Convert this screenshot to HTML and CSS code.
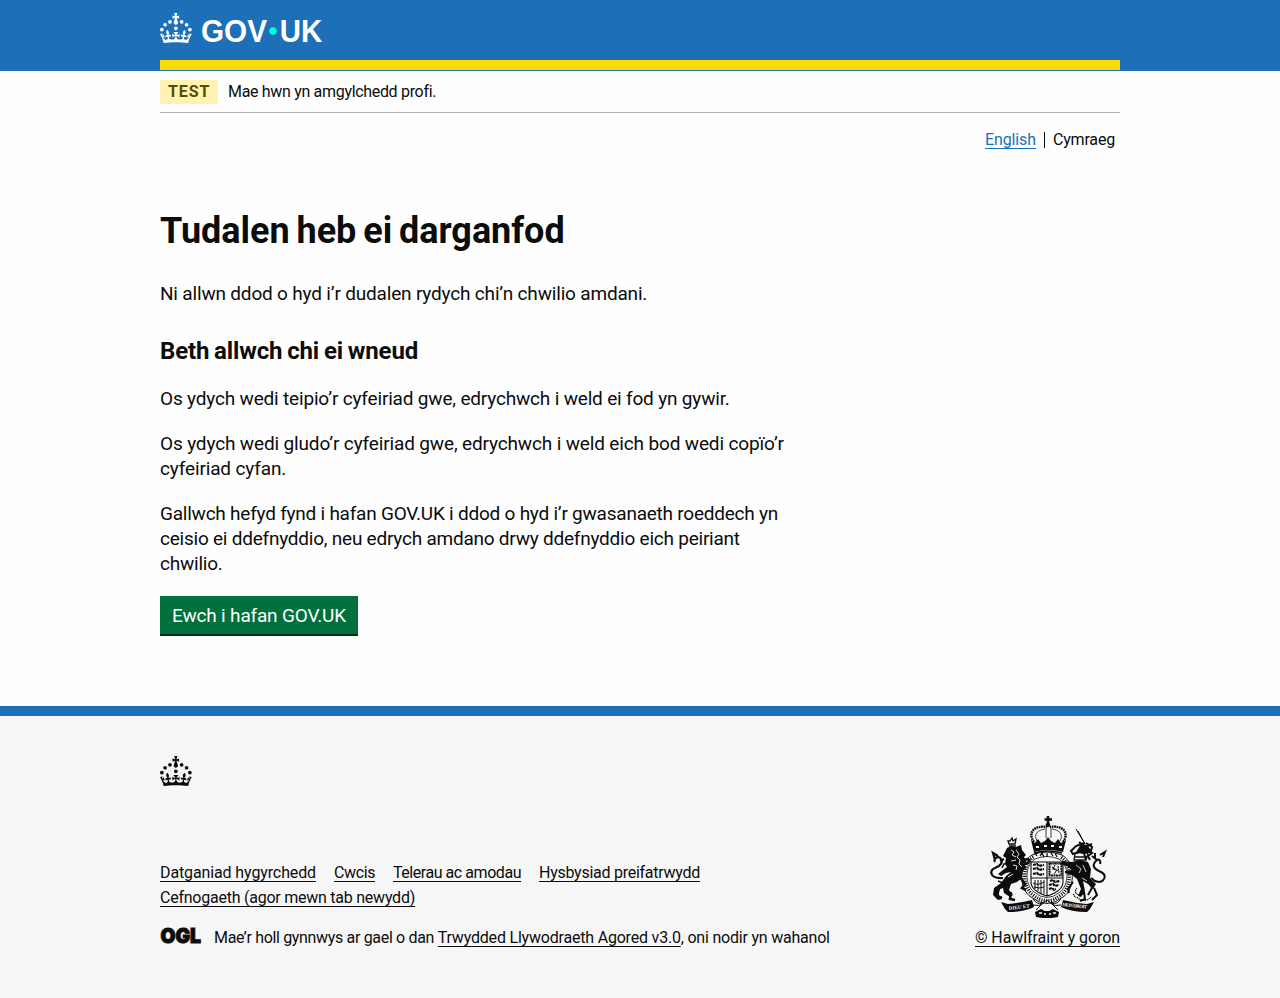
FILE: index.html
```html
<!DOCTYPE html>
<html lang="cy">
<head>
<meta charset="utf-8">
<title>Tudalen heb ei darganfod</title>
<link rel="stylesheet" href="styles.css">
</head>
<body>
<svg width="0" height="0" class="defs" aria-hidden="true">
  <symbol id="crown" viewBox="0 0 64 60">
    <circle cx="20" cy="17.6" r="3.7"/><circle cx="10.2" cy="23.5" r="3.7"/><circle cx="3.7" cy="33.2" r="3.7"/><circle cx="31.7" cy="30.6" r="3.7"/><circle cx="43.3" cy="17.6" r="3.7"/><circle cx="53.2" cy="23.5" r="3.7"/><circle cx="59.7" cy="33.2" r="3.7"/>
    <path d="M33.1,9.8c.2-.1.3-.3.5-.5l4.6,2.4v-6.8l-4.6,1.5c-.1-.2-.3-.3-.5-.5l1.9-5.9h-6.7l1.9,5.9c-.2.1-.3.3-.5.5l-4.6-1.5v6.8l4.6-2.4c.1.2.3.3.5.5l-2.6,8c-.9,2.8,1.2,5.7,4.1,5.7h0c3,0,5.1-2.9,4.1-5.7l-2.6-8ZM37,37.9s-3.4,3.8-4.1,6.1c2.2,0,4.2-.5,6.4-2.8l-.7,8.5c-2-2.8-4.4-4.1-5.7-3.8.1,3.1.5,6.7,5.8,7.2,3.7.3,6.7-1.5,7-3.8.4-2.6-2-4.3-3.7-1.6-1.4-4.5,2.4-6.1,4.9-3.2-1.9-4.5-1.8-7.7,2.4-10.9,3,4,2.6,7.3-1.2,11.1,2.4-1.3,6.2,0,4,4.6-1.2-2.8-3.7-2.2-4.2.2-.3,1.7.7,3.7,3,4.2,1.9.3,4.7-.9,7-5.9-1.3,0-2.4.7-3.9,1.7l2.4-8c.6,2.3,1.4,3.7,2.2,4.5.6-1.6.5-2.8,0-5.3l5,1.8c-2.6,3.6-5.2,8.7-7.3,17.5-7.4-1.1-15.7-1.7-24.5-1.7h0c-8.8,0-17.1.6-24.5,1.7-2.1-8.9-4.7-13.9-7.3-17.5l5-1.8c-.5,2.5-.6,3.7,0,5.3.8-.8,1.6-2.3,2.2-4.5l2.4,8c-1.5-1-2.6-1.7-3.9-1.7,2.3,5,5.2,6.2,7,5.9,2.3-.4,3.3-2.4,3-4.2-.5-2.4-3-3.1-4.2-.2-2.2-4.6,1.6-6,4-4.6-3.7-3.7-4.2-7.1-1.2-11.1,4.2,3.2,4.3,6.4,2.4,10.9,2.5-2.8,6.3-1.3,4.9,3.2-1.8-2.7-4.1-1-3.7,1.6.3,2.3,3.3,4.1,7,3.8,5.4-.5,5.7-4.2,5.8-7.2-1.3-.2-3.7,1-5.7,3.8l-.7-8.5c2.2,2.3,4.2,2.7,6.4,2.8-.7-2.3-4.1-6.1-4.1-6.1h10.6Z"/>
  </symbol>
</svg>

<header class="header">
  <div class="container header-bar">
    <svg class="logo" viewBox="0 0 162 30" role="img" aria-label="GOV.UK">
      <use href="#crown" width="32" height="30"/>
      <text x="41" y="29" textLength="66" lengthAdjust="spacingAndGlyphs">GOV</text>
      <circle class="dot" cx="113" cy="18" r="3.7"/>
      <text x="119.8" y="29" textLength="42.5" lengthAdjust="spacingAndGlyphs">UK</text>
    </svg>
  </div>
</header>

<div class="container">
  <div class="phase"><strong class="tag">TEST</strong><span class="phase-text">Mae hwn yn amgylchedd profi.</span></div>
  <nav class="languages"><a class="link-blue" href="#">English</a><span class="current">Cymraeg</span></nav>
  <main class="main">
    <h1>Tudalen heb ei darganfod</h1>
    <p>Ni allwn ddod o hyd i’r dudalen rydych chi’n chwilio amdani.</p>
    <h2>Beth allwch chi ei wneud</h2>
    <p>Os ydych wedi teipio’r cyfeiriad gwe, edrychwch i weld ei fod yn gywir.</p>
    <p class="pasted">Os ydych wedi gludo’r cyfeiriad gwe, edrychwch i weld eich bod wedi copïo’r<br>cyfeiriad cyfan.</p>
    <p class="search">Gallwch hefyd fynd i hafan GOV.UK i ddod o hyd i’r gwasanaeth roeddech yn<br>ceisio ei ddefnyddio, neu edrych amdano drwy ddefnyddio eich peiriant<br>chwilio.</p>
    <a class="button" href="#">Ewch i hafan GOV.UK</a>
  </main>
</div>

<footer class="footer">
  <div class="container">
    <svg class="footer-crown" aria-hidden="true"><use href="#crown" width="32" height="30"/></svg>
    <div class="footer-row">
      <div class="footer-meta">
        <ul class="links">
          <li><a class="l1" href="#">Datganiad hygyrchedd</a></li>
          <li><a class="l2" href="#">Cwcis</a></li>
          <li><a class="l3" href="#">Telerau ac amodau</a></li>
          <li><a class="l4" href="#">Hysbysiad preifatrwydd</a></li>
          <li><a class="l5" href="#">Cefnogaeth (agor mewn tab newydd)</a></li>
        </ul>
        <div class="licence">
          <svg class="ogl" viewBox="0 0 41 17" role="img" aria-label="OGL"><text x="0.4" y="15.4" textLength="40.6" lengthAdjust="spacingAndGlyphs">OGL</text></svg>
          <span class="licence-text"><span class="t1">Mae’r holl gynnwys ar gael o dan </span><a class="t2" href="#">Trwydded Llywodraeth Agored v3.0</a><span class="t3">, oni nodir yn wahanol</span></span>
        </div>
      </div>
      <a class="copyright" href="#">
        <svg class="crest" viewBox="0 0 126 106" aria-hidden="true">
          <!-- crown -->
          <path d="M63 4v9M59.500 7.500h7.500" stroke-width="2.600"/>
          <circle class="solid" cx="63" cy="13" r="2.300"/>
          <path d="M49 30C42 20 50 13 62 15M78 30C85 20 77 13 65 15" stroke-width="2.400" stroke-dasharray="1.800 .6"/>
          <path d="M52 29C48 22 53 18 60 17M75 29C79 22 74 18 67 17M61 16v10M66 16v10" stroke-width=".8"/>
          <path class="solid" d="M46 28l4 3 3-4 3 4 4-2 3-4 3 4 4 2 3-4 3 4 5-3-3 12q-15-4-29 0z"/>
          <path class="light" d="M51 35h3M59 34h3M66 34h3M74 35h3" stroke-width="2.200"/>
          <path d="M49 41q14-4 28 0" stroke-width="1.600"/>
          <!-- garter and shield -->
          <path d="M47 43C34 50 33 77 46 85Q62 98 78 85C91 77 90 50 77 43Q62 37 47 43z" stroke-width="1"/>
          <path d="M50 47C39 54 40 73 49 80Q62 91 75 80C84 73 85 54 74 47Q62 42 50 47z" stroke-width=".8"/>
          <path d="M48.500 45C37 52 37 75 47.500 82.500Q62 95 76.500 82.500C87 75 87 52 75.500 45" stroke-width="3.400" stroke-dasharray="1.100 1.300"/>
          <path d="M55 44l2-3 2 4M62 41v4M66 41l2 3M52 44l-2-3M70 41l2 4" stroke-width="1.300"/>
          <path d="M46 50h32v20q0 9-16 14-16-5-16-14zM62 50v34M46 66h32" stroke-width="1.100"/>
          <path d="M48 53l4-1 2 2 5-1M48 57l4-1 2 2 5-1M48 62l4-1 2 2 5-1M65 69l3-1 2 2 5-1M64 73l4-1 2 2 4-1M64 77l3-1 2 2 2-1" stroke-width="2.200" stroke-dasharray="3 .6"/>
          <path d="M65 52h11v11H65zM70 53l-2 4 4 1-3 4M73 54l1 7M67 55l6 4M64 51h13v13H64z" stroke-width="1.100" stroke-dasharray="2 .5"/>
          <path d="M50 68v9M53 68v11M56 68v13M59 68v14M48 71q5 3 11-1M49 75q5 2 10 0" stroke-width="1"/>
          <!-- lion -->
          <path d="M23 29l1 3h6l1-5-3 2-1-3-2 3zM24 34h7" stroke-width="1.300"/>
          <path class="solid" d="M22 36l4-2 5 1 5-2 1 5 4 5-2 2 2 5-2 1 2 5-3 3-1 7-5 4-6 2-2 6 4 5-3 2-6-4-1-5-5 2 1 5 3 4-4 1-5-5 1-7 7-5 5-7 5-4-5 1-5 3-3-2 5-4 4-3-2-3 1-6-3-2z"/>
          <path class="light" d="M26 38l3 2-2 3 4 2M31 38l3 4-2 3 3 3-1 4 3 3M26 49l5-1M28 62l-5 3M28 53l4 1-1 4" stroke-width=".9"/>
          <path d="M36 53l7-2 2-4M36 48l8-1M35 65l5 7-3 4 4 2M14 76l-2 8 5 2M26 80l-1 7 5 1" stroke-width="2.600"/>
          <path d="M18 66C3 67 5 57 10 56c6-2 8-6 6-9-2-4-8-1-6 3M13 44l-5-3 2 7M15 49l4-2" stroke-width="2.200"/>
          <path d="M26 43l-7 1M25 51l-6 1-2 4M18 71l-5-2" stroke-width="1.500"/>
          <!-- unicorn -->
          <path d="M91 17l9 15M93 19l7 13" stroke-width="1"/>
          <path d="M99 31l-8 3-5 5 2 3 6-2 5 1 2 7M101 31l6 4-1 4-4-2M94 30l6 5 7-3M102 39l5 2-4 3 2 4" stroke-width="2"/>
          <path class="solid" d="M96 32l6 1 4 5-3 4-8-1-5 1z"/>
          <path d="M90 42l-1 6h12l2-6M90 45h12" stroke-width="1.300"/>
          <path class="solid" d="M87 50l8-2 8 2 3 7-1 9 6 6-3 5-5-5-5-3 2 10-4 6-3-1 3-7-4-10-5-4-7-2v-2l7-1-5-4-7-2 3-3z"/>
          <path class="light" d="M91 53l5 4-2 4M98 53l3 7M97 66l5 3" stroke-width=".8"/>
          <path d="M88 70l-5 7 1 4M109 76l3 7-5 5M99 80l1 7-5 2M104 68l3 8-4 7" stroke-width="2"/>
          <path d="M106 66C116 76 125 64 116 60c-7-3-9-6-6-10 4-5 6-1 5 2M112 48l-5-4M110 47v-6M115 43l5-3-2 5" stroke-width="2"/>
          <path d="M92 76c-5 6 3 9 8 5M92 85c4 5 11 4 14 0M88 82l3 4" stroke-width="1.100" stroke-dasharray="1.500 .6"/>
          <!-- motto scroll -->
          <path class="solid" d="M16 90l7 2q12-1 24-4l2 7q-10 5-26 5l-3-3zM109 90l-7 2q-12-1-24-4l-2 7q10 5 26 5l3-3z"/>
          <text class="motto" x="24" y="98" textLength="21" transform="rotate(-7 24 98)">DIEU ET</text>
          <text class="motto" x="77" y="94" textLength="25" transform="rotate(6 77 94)">MON DROIT</text>
          <path d="M48 87q6 9 14 1 8 8 14-1M48 93q6 2 11-2M76 93q-6 2-11-2M57 92l-6 6M67 92l6 6" stroke-width="1"/>
          <path class="solid" d="M50 100l6-3 4 2 4 0 4-2 6 3-1 5-6 1H57l-6-1z"/>
          <path class="light" d="M54 101h3M59 102h2M64 102h2M68 101h3" stroke-width="1.300"/>
        </svg>
        <span class="copyright-text">© Hawlfraint y goron</span>
      </a>
    </div>
  </div>
</footer>
</body>
</html>
```
FILE: styles.css
```css
* { box-sizing: border-box; }
body { margin: 0; background: #fefefe; color: #0b0c0c; font: 400 16px/20px Roboto, sans-serif; }
.defs { display: block; }
.container { width: 960px; margin: 0 auto; }

.header { background: #1d70b8; height: 71px; }
.header-bar { height: 70px; padding-top: 13px; border-bottom: 10px solid #ffd90a; }
.logo { display: block; width: 162px; height: 30px; fill: #fff; overflow: visible; }
.logo text { font: 700 30.5px "Liberation Sans", sans-serif; }
.logo .dot { fill: #00ffe0; }

.phase { display: flex; align-items: center; height: 42px; border-bottom: 1px solid #b1b4b6; }
.tag { width: 58px; height: 24px; padding-left: 8px; background: #fff2b3; color: #594d00; font-weight: 700; line-height: 24px; letter-spacing: .9px; }
.phase-text { margin-left: 10px; letter-spacing: -.32px; }

.languages { display: flex; justify-content: flex-end; padding: 17px 5px 0 0; }
.languages .current { position: relative; margin-left: 8px; padding-left: 9px; letter-spacing: -.185px; }
.languages .current::before { content: ""; position: absolute; left: 0; top: 2px; width: 1px; height: 16px; background: #0b0c0c; }
a { color: inherit; text-decoration: underline; text-decoration-thickness: 1px; text-underline-offset: 3px; text-decoration-skip-ink: none; }
.link-blue { color: #1d70b8; letter-spacing: -.109px; }

.main { padding: 61px 0 70px; }
h1, h2, p { margin: 0; white-space: nowrap; }
h1 { margin-bottom: 30px; font-size: 36px; line-height: 40px; letter-spacing: -.03px; word-spacing: -2px; }
h2 { margin-bottom: 20px; padding-top: 10px; font-size: 24px; line-height: 30px; letter-spacing: -.14px; word-spacing: -1px; }
.main p { margin-bottom: 20px; font-size: 19px; line-height: 25px; letter-spacing: -.18px; }
.main .pasted { letter-spacing: -.148px; }
.main .search { letter-spacing: -.23px; }
.button { display: block; width: 198px; height: 38px; margin-bottom: 2px; background: #00703c; box-shadow: 0 2px 0 #002d18; color: #fff; font-size: 19px; line-height: 39px; padding-left: 12px; letter-spacing: -.177px; text-decoration: none; }

.footer { min-height: 292px; padding-top: 40px; border-top: 10px solid #1d70b8; background: #f7f7f7; }
.footer-crown { display: block; width: 32px; height: 30px; fill: #0b0c0c; }
.footer-row { display: flex; justify-content: space-between; margin-top: 26px; }
.footer-meta { padding-top: 51px; }
.links { display: flex; flex-wrap: wrap; width: 640px; gap: 5px 18px; margin: 0 0 20px; padding: 0; list-style: none; }
.l1 { letter-spacing: -.119px; }
.l2 { letter-spacing: -.394px; }
.l3 { letter-spacing: -.452px; }
.l4 { letter-spacing: -.263px; }
.l5 { letter-spacing: -.241px; }
.licence { display: flex; }
.ogl { width: 41px; height: 17px; margin: 0 13px 0 0; overflow: visible; fill: #0b0c0c; stroke: #0b0c0c; stroke-width: 1; }
.ogl text { font: 900 20px Inter, sans-serif; }
.licence-text { white-space: pre; }
.t1 { letter-spacing: -.33px; }
.t2 { letter-spacing: -.198px; }
.t3 { letter-spacing: -.212px; }
.copyright { display: block; width: 145px; text-decoration: none; }
.copyright-text { display: block; margin-top: 10px; text-decoration: underline; letter-spacing: -.087px; white-space: nowrap; }
.crest { display: block; width: 126px; height: 106px; margin-left: 10px; fill: none; stroke: #0b0c0c; }
.crest .solid { fill: #0b0c0c; stroke: none; }
.crest .light { stroke: #f7f7f7; }
.crest .motto { fill: #f7f7f7; stroke: none; font: 700 5px "Liberation Serif", serif; }
```
